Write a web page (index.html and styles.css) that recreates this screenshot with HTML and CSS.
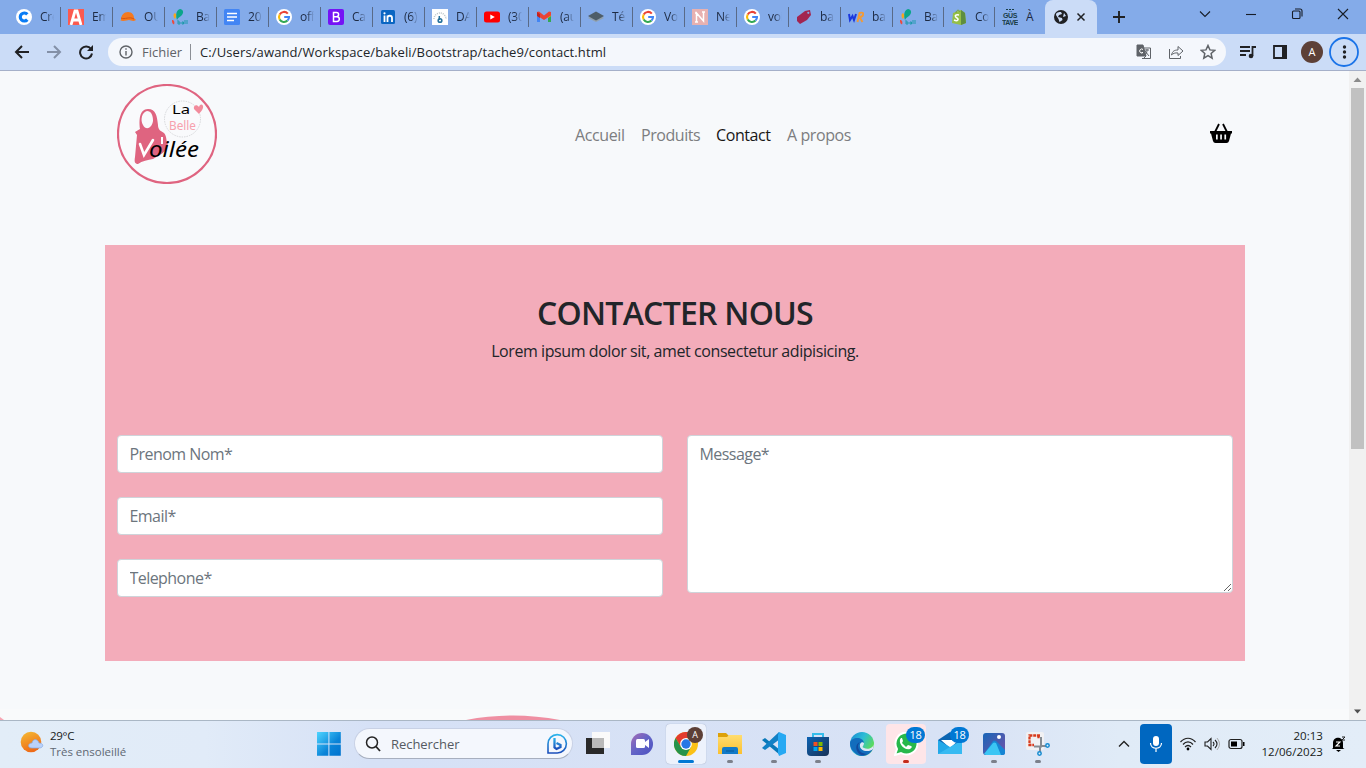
FILE: index.html
```html
<!DOCTYPE html>
<html lang="fr">
<head>
<meta charset="utf-8">
<title>Contact</title>
<link rel="stylesheet" href="styles.css">
</head>
<body>
<svg class="defs" width="0" height="0">
  <defs>
    <linearGradient id="win" x1="0" y1="0" x2="1" y2="1"><stop offset="0" stop-color="#4fd5ff"/><stop offset=".6" stop-color="#0a84d8"/><stop offset="1" stop-color="#0072ce"/></linearGradient>
    <linearGradient id="sun" x1="0" y1="0" x2=".4" y2="1"><stop offset="0" stop-color="#f5bd35"/><stop offset="1" stop-color="#ee6b18"/></linearGradient>
    <linearGradient id="chat" x1="0" y1="0" x2="1" y2="1"><stop offset="0" stop-color="#a66cb5"/><stop offset=".5" stop-color="#6264c7"/><stop offset="1" stop-color="#4b50c0"/></linearGradient>
    <linearGradient id="fold" x1="0" y1="0" x2="0" y2="1"><stop offset="0" stop-color="#ffdd70"/><stop offset="1" stop-color="#fbc02f"/></linearGradient>
    <linearGradient id="shop" x1="0" y1="0" x2="1" y2="1"><stop offset="0" stop-color="#0c62b3"/><stop offset="1" stop-color="#193255"/></linearGradient>
    <linearGradient id="edge" x1="0" y1="0" x2="1" y2=".6"><stop offset="0" stop-color="#1787d1"/><stop offset=".5" stop-color="#2cbcd7"/><stop offset="1" stop-color="#62df4b"/></linearGradient>
    <linearGradient id="photo" x1="0" y1="0" x2="1" y2="1"><stop offset="0" stop-color="#1766b8"/><stop offset="1" stop-color="#7651a7"/></linearGradient>
    <linearGradient id="bing" x1="0" y1="0" x2="0" y2="1"><stop offset="0" stop-color="#2bb4eb"/><stop offset="1" stop-color="#1b4dba"/></linearGradient>
  </defs>
  <symbol id="google" viewBox="0 0 16 16"><circle cx="8" cy="8" r="8" fill="#fff"/><g fill="none" stroke-width="2.1"><path d="M11.8 4.6A5 5 0 0 0 3.7 5.5" stroke="#ea4335"/><path d="M3.7 5.5A5 5 0 0 0 3.7 10.5" stroke="#fbbc05"/><path d="M3.7 10.5A5 5 0 0 0 11.5 11.6" stroke="#34a853"/><path d="M11.5 11.6A5 5 0 0 0 13 8H8.2" stroke="#4285f4"/></g></symbol>
  <symbol id="bakeli" viewBox="0 0 16 16"><path d="M5 11C3 5 5 0 8.500 0c3 1 3.500 4 1 6.500S6.500 8 5 11z" fill="#0ba58b"/><path d="M3 10C1 8 1 5 3 4c1.600 1 1.600 4 0 6z" fill="#f8a51b"/><path d="M0 11c2 0 3 2 2 4.500C0 15 0 13 0 11z" fill="#ed4a3d"/><path d="M6 11v4h2v-2H6m4 0h1.500v2H10zm3-2v4m2-4v4" fill="none" stroke="#1598a6" stroke-width=".9"/></symbol>
</svg>

<header class="browser">
  <div class="tabs">
    <div class="tab"><svg class="fav" viewBox="0 0 16 16"><circle cx="8" cy="8" r="8" fill="#fff"/><path d="M11.3 5.4A4 4 0 1 0 11.3 10.6" fill="none" stroke="#0a7cf5" stroke-width="3.2"/></svg><span class="tab-name">Cré</span></div>
    <div class="tab"><svg class="fav" viewBox="0 0 16 16"><path d="M0 0h16v16H0z" fill="#fb5a50"/><path d="M3 16L7 2h2l4 14M5 11h6" fill="none" stroke="#fff" stroke-width="2.8"/></svg><span class="tab-name">Em</span></div>
    <div class="tab"><svg class="fav" viewBox="0 0 16 16"><path d="M1 11C1 6 4 3 8 3s6 3 6 6l2 2c-3 2-5 0-7 0s-6 2-9 0z" fill="#f47a20"/><path d="M1 9c4 2 8-2 13 1" fill="none" stroke="#d8540e"/></svg><span class="tab-name">OUI</span></div>
    <div class="tab"><svg class="fav"><use href="#bakeli"/></svg><span class="tab-name">Bak</span></div>
    <div class="tab"><svg class="fav" viewBox="0 0 16 16"><rect width="16" height="16" rx="1.5" fill="#4285f4"/><path d="M3 4.5h10M3 8h10M3 11.500h7" stroke="#fff" stroke-width="1.7"/></svg><span class="tab-name">202</span></div>
    <div class="tab"><svg class="fav"><use href="#google"/></svg><span class="tab-name">off</span></div>
    <div class="tab"><svg class="fav" viewBox="0 0 16 16"><rect width="16" height="16" rx="2" fill="#7512f5"/><path d="M5.5 3.500h3a2 2 0 0 1 0 4.200h-3zm0 4.200h3.500a2.300 2.300 0 0 1 0 4.700H5.500z" fill="none" stroke="#fff" stroke-width="1.5"/></svg><span class="tab-name">Car</span></div>
    <div class="tab"><svg class="fav" viewBox="0 0 16 16"><rect x="1" y="1" width="14" height="14" rx="1.500" fill="#0a66c2"/><path d="M4.500 6.500V13M7.500 13V6.500M7.500 9c0-3 4.500-3 4.500 0v4" fill="none" stroke="#fff" stroke-width="1.800"/><circle cx="4.500" cy="4.300" r="1.100" fill="#fff"/></svg><span class="tab-name">(6)</span></div>
    <div class="tab"><svg class="fav" viewBox="0 0 16 16"><path d="M0 0h16v16H0z" fill="#fff"/><path d="M2 10a6 6 0 0 1 12 0" fill="none" stroke="#b9c2c7" stroke-width="1.500" stroke-dasharray="1 1"/><path d="M7.300 7v4" stroke="#25719b" stroke-width="1.500"/><circle cx="8" cy="11.500" r="1.800" fill="none" stroke="#25719b" stroke-width="1.600"/></svg><span class="tab-name">DA</span></div>
    <div class="tab"><svg class="fav" viewBox="0 0 16 16"><rect y="2.500" width="16" height="11" rx="2.500" fill="#f00"/><path d="M6.300 5.500v5l4.500-2.500z" fill="#fff"/></svg><span class="tab-name">(30</span></div>
    <div class="tab"><svg class="fav" viewBox="0 0 16 16"><path d="M1 3h3v10H1z" fill="#4285f4"/><path d="M12 3h3v10h-3z" fill="#34a853"/><path d="M12 3h3v4l-3 2z" fill="#fbbc04"/><path d="M1 3l2-.500 5 4 5-4 2 .500v3.500L8 11 1 6.500z" fill="#ea4335"/><path d="M1 3l3 2v4L1 7z" fill="#c5221f"/></svg><span class="tab-name">(au</span></div>
    <div class="tab"><svg class="fav" viewBox="0 0 16 16"><path d="M0 9l8-4 8 4-8 4z" fill="#91a0ac"/><path d="M0 7l8-4.500L16 7l-8 4.500z" fill="#4e5d68"/></svg><span class="tab-name">Té</span></div>
    <div class="tab"><svg class="fav"><use href="#google"/></svg><span class="tab-name">Vo</span></div>
    <div class="tab"><svg class="fav" viewBox="0 0 16 16"><path d="M0 0h16v16H0z" fill="#e7b1b1"/><path d="M4.500 13V4l7 8V3M3 13h3M3 4h2m5-1h3" fill="none" stroke="#fff" stroke-width="1.500"/></svg><span class="tab-name">Ne</span></div>
    <div class="tab"><svg class="fav"><use href="#google"/></svg><span class="tab-name">voi</span></div>
    <div class="tab"><svg class="fav" viewBox="0 0 16 16"><path d="M1 8l8-6 5-1 1 5-4 5-7 4-3-3z" fill="#a32450"/><circle cx="12.300" cy="3.800" r="1.100" fill="#84abe9"/></svg><span class="tab-name">bak</span></div>
    <div class="tab"><svg class="fav" viewBox="0 0 16 16"><path d="M1 5l1 6 2.500-4 1.500 4 2-6" fill="none" stroke="#1b37dd" stroke-width="2"/><path d="M9.500 13l2-9c6-2 4 4 0 4l3 5" fill="none" stroke="#f19a37" stroke-width="1.900"/></svg><span class="tab-name">bak</span></div>
    <div class="tab narrow"><svg class="fav"><use href="#bakeli"/></svg><span class="tab-name">Bak</span></div>
    <div class="tab narrow"><svg class="fav" viewBox="0 0 16 16"><path d="M2 4l8-3 4 3 1 10-5 2-9-2z" fill="#95bf47"/><path d="M10 1l4 3 1 10-5 2z" fill="#5e8e3e"/><path d="M5 4c0-3 3-4 4-1" fill="none" stroke="#78a33a"/><path d="M8 6C3 5 4 8 6 9s1 4-3 2" fill="none" stroke="#fff" stroke-width="1.600"/></svg><span class="tab-name">Co</span></div>
    <div class="tab last"><svg class="fav" viewBox="0 0 16 16"><text x="8" y="9" class="gus">GÜS</text><text x="8" y="15.500" class="gus">TAVE</text><path d="M4 .5h8" stroke="#183d47" stroke-dasharray="2 1"/></svg><span class="tab-name">À</span></div>
    <div class="tab active"><svg class="fav" viewBox="0 0 16 16"><circle cx="8" cy="8" r="7" fill="#202124"/><path d="M3 6c0-3 3-3 5-3l1 2-3 1-1 2 4 1 .5 2-3 2-1-3zM11 4l2 3-3 1z" fill="#cbdcf7"/></svg><svg class="close" viewBox="0 0 10 10"><path d="M1.500 1.500l7 7m0-7l-7 7" stroke="#202124" stroke-width="1.500"/></svg></div>
    <svg class="plus" viewBox="0 0 12 12"><path d="M6 0v12M0 6h12" stroke="#202124" stroke-width="1.900"/></svg>
    <div class="window-controls">
      <svg viewBox="0 0 12 12"><path d="M1 3.500l5 5 5-5" /></svg>
      <svg viewBox="0 0 12 12"><path d="M1 6.500h10"/></svg>
      <svg viewBox="0 0 12 12"><rect x="1.500" y="3" width="7.500" height="7.500" rx="1"/><path d="M4 1h5a2 2 0 0 1 2 2v5.500"/></svg>
      <svg viewBox="0 0 12 12"><path d="M1 1l10 10M11 1L1 11"/></svg>
    </div>
  </div>
  <div class="toolbar">
    <div class="navigation">
      <svg viewBox="0 0 16 16"><path d="M15 8H2M8 2L2 8l6 6"/></svg>
      <svg class="disabled" viewBox="0 0 16 16"><path d="M1 8h13M8 2l6 6-6 6"/></svg>
      <svg viewBox="0 0 16 16"><path d="M13 5A6 6 0 1 0 14 9.500"/><path d="M15 1v6H9z" fill="#202124" stroke="none"/></svg>
    </div>
    <div class="address">
      <svg class="info" viewBox="0 0 14 14"><circle cx="7" cy="7" r="6"/><path d="M7 6v4.500M7 3.300v1.500"/></svg>
      <span class="scheme">Fichier</span><span class="path">C:/Users/awand/Workspace/bakeli/Bootstrap/tache9/contact.html</span>
      <div class="address-icons">
        <svg viewBox="0 0 16 16"><path d="M7 4h7.500v10.500H6" fill="none"/><path d="M1 1h6l3 11H1z" fill="#5f6368"/><path d="M7 5.500a2 2 0 1 0 0 3H5.500" stroke="#fff"/><path d="M9 6h4M11 5v1c0 3-1 4-2 5m0-4l4 5M7 15l3-3"/></svg>
        <svg viewBox="0 0 16 16"><path d="M1.500 5v9.500h11V12M3.500 11c1-4 3-5 6.500-5V2.500l5 4.500-5 4.500V9c-3-.500-5 .500-6.500 2z"/></svg>
        <svg viewBox="0 0 16 16"><path d="M8 1.500l1.900 4.400 4.800.4-3.600 3.200 1 4.700L8 11.700l-4.200 2.500 1-4.700-3.600-3.200 4.800-.4z" stroke-width="1.500"/></svg>
      </div>
    </div>
    <svg class="tool-icon media" viewBox="0 0 16 16"><path d="M0 3h10M0 7h10M0 11h6M12.500 12V3H16" /><circle cx="11" cy="12" r="2.300" fill="#202124" stroke="none"/></svg>
    <svg class="tool-icon panel" viewBox="0 0 16 16"><path d="M2 2h12v12H2z"/><path d="M10 1h5v14h-5z" fill="#202124" stroke="none"/></svg>
    <span class="avatar">A</span>
    <svg class="menu" viewBox="0 0 30 30"><circle cx="15" cy="15" r="14"/><g class="dots"><circle cx="15.500" cy="10" r="1.700"/><circle cx="15.500" cy="15" r="1.700"/><circle cx="15.500" cy="20" r="1.700"/></g></svg>
  </div>
</header>

<main class="viewport">
  <div class="page">
    <nav class="site-nav">
      <svg class="logo" viewBox="0 0 100 100">
        <circle cx="50" cy="50" r="49" fill="#f9fafc" stroke="#df6480" stroke-width="2.200"/>
        <path fill-rule="evenodd" d="M23 45c-1-8-1-20 8-20 8 0 9 7 10 16 0 5 3 6 6 8 3 3 2 9 4 12-2 7-8 10-15 14-5 1-11 2-15 5-3 0-4-2-3-7l2-22-2-3zM30 27c-5 1-7 9-4 14 3 6 9 3 10-4 0-6-2-10-6-10z" fill="#df6480"/>
        <circle cx="65.500" cy="35" r="18" fill="none" stroke="#c7c8cc" stroke-width=".7" stroke-dasharray="1.500 1"/>
        <path d="M82 30l-5-5c-1-4 3-5 5-2 1-4 5-3 4 1-1 3-3 4-4 6z" fill="#f28b9c"/>
        <text x="55" y="30" class="logo-la" textLength="18" lengthAdjust="spacingAndGlyphs">La</text>
        <text x="52" y="46" class="logo-belle" textLength="27" lengthAdjust="spacingAndGlyphs">Belle</text>
        <path d="M23 60l4 11 9-15" fill="none" stroke="#fff" stroke-width="2.600" stroke-linecap="round"/><path d="M45 53v7" stroke="#fff" stroke-width="2"/>
        <text x="32" y="73" class="logo-voilee" textLength="50" lengthAdjust="spacingAndGlyphs">oilée</text>
      </svg>
      <div class="links"><a class="l1">Accueil</a><a class="l2">Produits</a><a class="l3 current">Contact</a><a class="l4">A propos</a></div>
      <svg class="basket" viewBox="0 0 24 22"><path d="M6 9l4-8M18 9l-4-8" stroke="#000" stroke-width="1.800"/><path fill-rule="evenodd" d="M1 8h22v2.500h-1l-2 7.500q-.5 2-2.500 2h-11Q4.500 20 4 18L2 10.500H1zM7 11.500v5h1.700v-5zm4.200 0v5h1.700v-5zm4.200 0v5h1.700v-5z"/></svg>
    </nav>
    <section class="contact">
      <h2>CONTACTER NOUS</h2>
      <p>Lorem ipsum dolor sit, amet consectetur adipisicing.</p>
      <form class="form">
        <div class="fields">
          <input class="field f-name" placeholder="Prenom Nom*">
          <input class="field f-mail" placeholder="Email*">
          <input class="field f-phone" placeholder="Telephone*">
        </div>
        <textarea class="field message" placeholder="Message*"></textarea>
      </form>
    </section>
    <svg class="wave" viewBox="0 0 1349 11"><path d="M0 0h1349v11H0z" fill="#f9fafb"/><path d="M0 8l4 3H0z" fill="#f7a6b3"/><path d="M466 11Q513 2 560 11z" fill="#ef8fa2"/></svg>
  </div>
  <div class="scrollbar"><svg viewBox="0 0 17 17"><path d="M4.500 11l4-4.500 4 4.500z" fill="#8b8b8b"/></svg><div class="thumb"></div><svg class="down" viewBox="0 0 17 17"><path d="M5 6.500h7L8.500 10.500z" fill="#505050"/></svg></div>
</main>

<footer class="taskbar">
  <div class="weather">
    <svg viewBox="0 0 24 24"><circle cx="11" cy="11" r="10.300" fill="url(#sun)"/><path d="M12 17c-5 0-4-5 0-5 1-5 6-4 7 0 5 0 5 5 0 5z" fill="#b9d1fa" stroke="#84a9e4" stroke-width=".7"/></svg>
    <div><div class="temp">29°C</div><div class="sky">Très ensoleillé</div></div>
  </div>
  <svg class="start" viewBox="0 0 24 24"><path d="M0 0h11.400v11.400H0zM12.400 0h11.400v11.400H12.400zM0 12.400h11.400v11.400H0zM12.400 12.400h11.400v11.400H12.400z" fill="url(#win)"/></svg>
  <div class="search">
    <svg viewBox="0 0 16 16"><circle cx="7" cy="6.500" r="5.500" fill="none" stroke="#242424" stroke-width="1.500"/><path d="M11 10.500l4 4.500" stroke="#242424" stroke-width="1.800"/></svg>
    <span>Rechercher</span>
    <svg class="bing" viewBox="0 0 22 22"><path d="M2 20V11a9.200 9.200 0 1 1 9 9z" fill="none" stroke="url(#bing)" stroke-width="1.600"/><path d="M8.500 5v9.500l2 1.500 4-2v-2l-4-2" fill="none" stroke="url(#bing)" stroke-width="2.300"/></svg>
  </div>
  <div class="apps">
    <div class="app"><svg viewBox="0 0 24 24"><path d="M0 6h18v16H0z" fill="#292929"/><path d="M6 0h18v16H6z" fill="#fafafa"/><path d="M6 6h12v10H6z" fill="#b9b9b9"/></svg></div>
    <div class="app"><svg viewBox="0 0 24 24"><path d="M1 22V12A11 11 0 1 1 12 23H1z" fill="url(#chat)"/><rect x="6" y="7" width="9" height="9" rx="1.500" fill="#fff"/><path d="M15 10l4-3v9l-4-3z" fill="#fff"/></svg></div>
    <div class="app selected"><svg viewBox="0 0 24 24"><circle cx="12" cy="12" r="12" fill="#fbc116"/><path d="M1.600 6A12 12 0 0 1 22.400 6H12L7 15z" fill="#e33b2e"/><path d="M1.600 6A12 12 0 0 0 12 24l5-9H7z" fill="#26934b"/><circle cx="12" cy="12" r="5.900" fill="#fff"/><circle cx="12" cy="12" r="4.700" fill="#2677e5"/></svg><span class="profile">A</span><i class="mark on"></i></div>
    <div class="app"><svg viewBox="0 0 24 24"><path d="M0 1h8l3 3v5H0z" fill="#dda109"/><path d="M0 5h9l2-2h13v19H0z" fill="url(#fold)"/><path d="M4 22v-5q0-2 2-2h12q2 0 2 2v5z" fill="#117ac8"/><path d="M8 19h8" stroke="#0b5897"/></svg><i class="mark"></i></div>
    <div class="app"><svg viewBox="0 0 24 24"><path d="M0 8l3-2 15 12v5z" fill="#0878b9"/><path d="M0 16L17 0l1 7L3 18z" fill="#1180c5"/><path d="M17 0l7 3v18l-7 3-1-3V3z" fill="#27a9f3"/></svg><i class="mark"></i></div>
    <div class="app"><svg viewBox="0 0 24 24"><path d="M7 6V2h10v4" fill="none" stroke="#35bdeb" stroke-width="2"/><path d="M1 5h22v15q0 4-4 4H5q-4 0-4-4z" fill="url(#shop)"/><path d="M7.500 10h4v4h-4z" fill="#f25022"/><path d="M12.500 10h4v4h-4z" fill="#7fba00"/><path d="M7.500 15h4v4h-4z" fill="#00a4ef"/><path d="M12.500 15h4v4h-4z" fill="#ffb900"/></svg><i class="mark"></i></div>
    <div class="app"><svg viewBox="0 0 24 24"><circle cx="12" cy="12" r="12" fill="url(#edge)"/><path d="M0 11C1 5 13 4 14 11c-4-3-8 6 2 8 4 0 6-2 7-2-4 8-13 9-18 4Q0 17 0 11z" fill="#126dbd"/><path d="M10 10c-5 5 0 12 7 12-9 5-15-9-7-12z" fill="#13499c"/><path d="M14 11c0 3-3 4 0 5 4 2 9 0 10-4l-1 5c-4 4-14 2-13-4 0-2 2-4 4-2z" fill="#dce5f6"/></svg></div>
    <div class="app alert"><svg viewBox="0 0 24 24"><path d="M1 23l2-6A11 11 0 1 1 7 21z" fill="#27b84b" stroke="#fff" stroke-width="2"/><path d="M7 6c-4 4 3 13 9 11q3-2 1-3l-3-1-2 2-4-4 1-2-1-3z" fill="#fff"/></svg><span class="badge">18</span><i class="mark red"></i></div>
    <div class="app"><svg viewBox="0 0 24 24"><path d="M0 8L12 0l12 8v14H0z" fill="#0b65b2"/><path d="M3 8h18l-9 8z" fill="#fff"/><path d="M0 8l24 14H0z" fill="#23a8e8"/><path d="M24 8L0 22h24z" fill="#37baf2"/></svg><span class="badge">18</span></div>
    <div class="app"><svg viewBox="0 0 24 24"><rect x="1" y="1" width="22" height="22" rx="3" fill="url(#photo)"/><path d="M2 22L11 9q1-1 3 0l9 9v3q0 2-2 2H4z" fill="#1685d4"/><path d="M2 22l9-11q1-1 3 0l5 12H4z" fill="#3bc6f4"/><circle cx="17" cy="5" r="2" fill="#fff"/></svg><i class="mark"></i></div>
    <div class="app"><svg viewBox="0 0 24 24"><rect width="18" height="18" rx="2" fill="#f1f1f3"/><path d="M14 3.500H3.500V13H8M12.500 3v4" fill="none" stroke="#d83b1d" stroke-width="2.300" stroke-dasharray="3 .8"/><path d="M15 5v9.500H8M14 14v6M15 14h6" fill="none" stroke="#858b92" stroke-width="2"/><circle cx="21.500" cy="13.500" r="1.700" fill="#d9effc" stroke="#168bd0" stroke-width="1.500"/><circle cx="13.500" cy="21.500" r="1.700" fill="#d9effc" stroke="#168bd0" stroke-width="1.500"/></svg><i class="mark"></i></div>
  </div>
  <div class="tray">
    <svg class="chevron" viewBox="0 0 12 12"><path d="M1 8.500l5-5 5 5" fill="none" stroke="#222" stroke-width="1.400"/></svg>
    <span class="mic"><svg viewBox="0 0 14 18"><rect x="4" y="1" width="6" height="10" rx="3" fill="#fff"/><path d="M1.500 8c0 7 11 7 11 0M7 13v4" fill="none" stroke="#fff" stroke-width="1.200"/></svg></span>
    <svg class="wifi" viewBox="0 0 16 16"><path d="M.5 6C5 1 11 1 15.500 6M3 8.500c3-3.500 7-3.500 10 0M5 11c2-2 4-2 6 0" fill="none" stroke="#202020" stroke-width="1.200"/><circle cx="8" cy="13" r="1.400"/></svg>
    <svg class="volume" viewBox="0 0 16 16"><path d="M1 6h2.500L7 2.500v11L3.500 10H1zM9 6q2 2 0 4M11 4q4 4 0 8" fill="none" stroke="#202020" stroke-width="1.100"/><path d="M13 2q5 6 0 12" fill="none" stroke="#aaa"/></svg>
    <svg class="battery" viewBox="0 0 17 16"><rect x="1" y="3.500" width="13" height="9" rx="2" fill="none" stroke="#202020" stroke-width="1.200"/><path d="M3 5.500h6v5H3zM15 6h1.500v4H15z"/></svg>
    <div class="clock">20:13<br>12/06/2023</div>
    <svg class="bell" viewBox="0 0 16 16"><path d="M2 12V7c0-7 10-7 10 0v5l1.500 1H1zM5 14h5l-2.500 2z"/><path d="M5 6h4l-4 4h4" fill="none" stroke="#fff" stroke-width="1.100"/><path d="M11 1h3l-3 3h3" fill="none" stroke="#202020"/></svg>
  </div>
</footer>
</body>
</html>
```
FILE: styles.css
```css
* { box-sizing: border-box; }
body { margin: 0; width: 1366px; height: 768px; overflow: hidden; display: flex; flex-direction: column; font-family: "Open Sans", "Noto Sans", sans-serif; color: #212529; }
svg { display: block; flex: none; }
.defs { position: absolute; }

.browser { height: 71px; flex: none; background: #cbdcf7; border-bottom: 1px solid #a5b0c9; }
.tabs { height: 34px; display: flex; padding-left: 8px; background: #84abe9; }
.tab { width: 52px; flex: none; display: flex; align-items: center; padding-left: 8px; background: linear-gradient(#596a87, #596a87) left 7px / 1px 20px no-repeat; }
.tab:first-child { background: none; }
.tab.narrow, .tab.last { width: 51px; }
.fav { width: 16px; height: 16px; }
.tab-name { width: 14px; margin-left: 8px; overflow: hidden; white-space: nowrap; font-size: 12px; line-height: 18px; letter-spacing: -.2px; color: #1d2a42; -webkit-mask-image: linear-gradient(90deg, #000 50%, transparent); mask-image: linear-gradient(90deg, #000 50%, transparent); }
.last .tab-name { -webkit-mask-image: none; mask-image: none; }
.gus { font: bold 7px "Liberation Sans", sans-serif; text-anchor: middle; fill: #183d47; letter-spacing: -.4px; }
.tab.active { background: #cbdcf7; border-radius: 8px 8px 0 0; }
.close { width: 10px; height: 10px; margin-left: 7px; }
.plus { width: 12px; height: 12px; margin: 11px 0 0 16px; }
.window-controls { margin: 8px 17px 0 auto; display: flex; gap: 34px; }
.window-controls svg { width: 12px; height: 12px; fill: none; stroke: #171d27; stroke-width: 1.1; }
.toolbar { height: 36px; display: flex; align-items: center; padding-left: 14px; }
.navigation { display: flex; gap: 16px; width: 94px; fill: none; stroke: #202124; stroke-width: 2; }
.navigation svg { width: 16px; height: 16px; }
.navigation .disabled { stroke: #8390a7; }
.address { width: 1118px; height: 28px; border-radius: 14px; background: #f4f7fc; display: flex; align-items: center; padding: 0 10px 0 11px; font-size: 13px; }
.info { width: 14px; height: 14px; fill: none; stroke: #5f6368; stroke-width: 1.4; }
.scheme { color: #5f6368; margin-left: 9px; width: 49px; height: 16px; line-height: 16px; border-right: 1px solid #8b8f96; letter-spacing: 0; }
.path { margin-left: 9px; letter-spacing: .11px; white-space: nowrap; }
.address-icons { margin-left: auto; display: flex; gap: 16px; }
.address-icons svg { width: 16px; height: 16px; fill: none; stroke: #5f6368; }
.tool-icon { width: 16px; height: 16px; fill: none; stroke: #202124; stroke-width: 1.8; }
.media { margin-left: 14px; }
.panel { margin-left: 16px; }
.avatar { width: 22px; height: 22px; margin-left: 13px; border-radius: 50%; background: #5d4037; color: #fff; font-size: 11px; line-height: 22px; text-align: center; }
.menu { width: 30px; height: 30px; margin-left: 6px; fill: none; stroke: #1a73e8; stroke-width: 1.8; }
.dots { fill: #202124; stroke: none; }

.viewport { height: 649px; flex: none; display: flex; }
.page { width: 1349px; background: #f7f9fb; display: flex; flex-direction: column; }
.site-nav { height: 126px; width: 1140px; margin: 0 0 0 105px; padding: 0 12px; display: flex; align-items: center; }
.logo { width: 100px; height: 100px; }
.logo-la { font: 12px "Noto Sans", sans-serif; }
.logo-belle { font: 12px "Noto Sans", sans-serif; fill: #f7a0ad; }
.logo-voilee { font: italic 22px "Noto Sans", sans-serif; }
.links { display: flex; margin-left: 358px; gap: 16px; font-size: 16px; line-height: 24px; padding-top: 1px; color: #7c7d80; white-space: nowrap; }
.l1 { width: 50px; letter-spacing: -.38px; }
.l2 { width: 59px; letter-spacing: -.45px; }
.l3 { width: 55px; letter-spacing: -.4px; }
.l4 { width: 65px; letter-spacing: -.4px; }
.current { color: #171717; }
.basket { width: 24px; height: 22px; margin-left: auto; }
.contact { width: 1140px; height: 416px; flex: none; margin: 48px 0 0 105px; padding: 47px 12px 0; background: #f3acba; }
h2 { margin: 0; text-align: center; font-size: 32px; line-height: 41px; font-weight: 600; letter-spacing: -.75px; white-space: nowrap; }
.contact p { margin: 6px 0 0; text-align: center; font-size: 16px; line-height: 25px; letter-spacing: -.42px; white-space: nowrap; }
.form { display: flex; gap: 24px; margin-top: 71px; }
.fields { width: 546px; display: flex; flex-direction: column; gap: 24px; }
.field { display: block; width: 546px; height: 38px; margin: 0; border: 1px solid #ced4da; border-radius: 4px; background: #fff; padding: 6px 11.5px; font: 16px/24px "Open Sans", sans-serif; letter-spacing: -.55px; }
.field::placeholder { color: #6c757d; opacity: 1; }
.message { height: 158px; resize: vertical; }
.wave { width: 1349px; height: 11px; margin-top: auto; }
.scrollbar { width: 17px; background: #f1f1f1; display: flex; flex-direction: column; }
.scrollbar svg { width: 17px; height: 17px; }
.thumb { width: 13px; height: 361px; margin-left: 2px; background: #c1c1c1; }
.scrollbar .down { margin-top: auto; }

.taskbar { height: 48px; flex: none; display: flex; align-items: center; padding: 0 0 2px 20px; border-top: 1px solid #aab7c5; background: linear-gradient(90deg, #e2edf8, #e1ebf8 15%, #d6e1f6 27%, #d8e2f5 70%, #e0ebf7 82%, #e3edf8); }
.weather { width: 297px; display: flex; gap: 6px; font-size: 11.5px; line-height: 16px; white-space: nowrap; }
.weather svg { width: 24px; height: 24px; margin-top: 3px; }
.temp { letter-spacing: -.3px; color: #171b20; }
.sky { letter-spacing: -.02px; color: #606873; }
.start { width: 24px; height: 24px; }
.search { width: 219px; height: 31px; margin-left: 13px; border-radius: 16px; border: 1px solid #c8d1e5; border-bottom-color: #a7afbf; background: #f4f7fd; display: flex; align-items: center; padding: 0 4px 0 10px; font-size: 13px; letter-spacing: -.05px; color: #555a62; }
.search svg { width: 16px; height: 16px; }
.search span { margin-left: 10px; }
.search .bing { width: 22px; height: 22px; margin-left: auto; }
.apps { display: flex; gap: 4px; margin-left: 5px; }
.app { position: relative; width: 40px; height: 40px; display: flex; align-items: center; justify-content: center; border-radius: 4px; }
.app > svg { width: 24px; height: 24px; }
.selected { background: #edf2fc; box-shadow: 0 0 1px #8995b1; }
.alert { background: #fee5e8; }
.mark { position: absolute; bottom: 1px; left: 17px; width: 6px; height: 3px; border-radius: 2px; background: #7c808b; }
.on { left: 12px; width: 16px; background: #0078d4; }
.red { background: #c42b1c; }
.profile, .badge { position: absolute; text-align: center; color: #fff; }
.profile { width: 16px; height: 16px; left: 21px; top: 3px; border-radius: 50%; background: #5d4037; font-size: 9px; line-height: 16px; }
.badge { width: 19px; height: 16px; left: 20px; top: 3px; border-radius: 8px; background: #0078d4; font-size: 11px; line-height: 16px; letter-spacing: -.4px; }
.tray { display: flex; align-items: center; margin-left: 60px; }
.chevron { width: 12px; height: 12px; }
.mic { width: 32px; height: 40px; margin-left: 10px; border-radius: 4px; background: #0067c0; display: flex; align-items: center; justify-content: center; }
.mic svg { width: 14px; height: 18px; }
.wifi { width: 16px; height: 16px; margin-left: 8px; }
.volume { width: 16px; height: 16px; margin-left: 8px; }
.battery { width: 17px; height: 16px; margin-left: 8px; }
.clock { width: 66px; margin-left: 12px; text-align: right; font-size: 11.5px; line-height: 16px; letter-spacing: .05px; white-space: nowrap; color: #171b20; }
.bell { width: 16px; height: 16px; margin-left: 8px; }
```
